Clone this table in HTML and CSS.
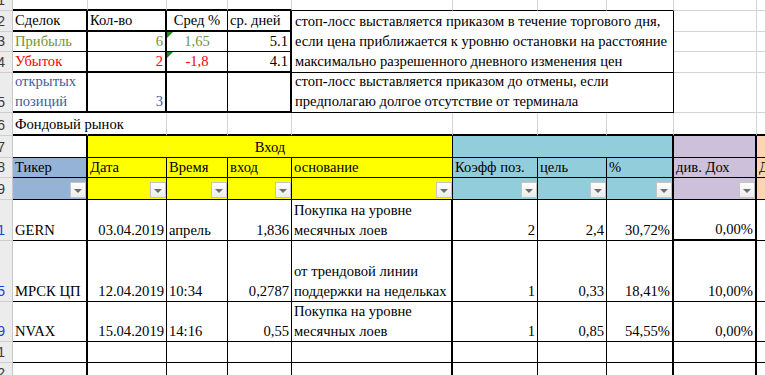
FILE: index.html
```html
<!DOCTYPE html>
<html lang="ru">
<head>
<meta charset="utf-8">
<title>Фондовый рынок</title>
<link rel="stylesheet" href="styles.css">
</head>
<body>
<div class="sheet">
  <!-- row 1 -->
  <div class="rh">1</div>
  <div class="c bT"></div><div class="c bT"></div><div class="c bT"></div><div class="c bT"></div>
  <div class="c bB"></div><div class="c bB"></div><div class="c bB"></div><div class="c bB"></div>
  <div class="c"></div><div class="c"></div>

  <!-- row 2 -->
  <div class="rh">2</div>
  <div class="c rT bT">Сделок</div>
  <div class="c rT bT">Кол-во</div>
  <div class="c rB bT ctr">Сред %</div>
  <div class="c rT bT">ср. дней</div>
  <div class="c note span4 rows3 rB bB"><p>стоп-лосс выставляется приказом в течение торгового дня,<br>если цена приближается к уровню остановки на расстояние<br>максимально разрешенного дневного изменения цен</p></div>
  <div class="c"></div><div class="c"></div>

  <!-- row 3 -->
  <div class="rh">3</div>
  <div class="c olive rT bB">Прибыль</div>
  <div class="c olive rT bB r">6</div>
  <div class="c olive rB bB ctr flag">1,65</div>
  <div class="c rT bB r">5.1</div>
  <div class="c"></div><div class="c"></div>

  <!-- row 4 -->
  <div class="rh">4</div>
  <div class="c red rT bT">Убыток</div>
  <div class="c red rT bT r">2</div>
  <div class="c red rB bT ctr flag">-1,8</div>
  <div class="c rT bT r">4.1</div>
  <div class="c"></div><div class="c"></div>

  <!-- row 5 -->
  <div class="rh">5</div>
  <div class="c steel rT bT"><p>открытых<br>позиций</p></div>
  <div class="c steel rT bT r">3</div>
  <div class="c rB bT"></div>
  <div class="c rT bT"></div>
  <div class="c note span4 rB bB"><p>стоп-лосс выставляется приказом до отмены, если<br>предполагаю долгое отсутствие от терминала</p></div>
  <div class="c"></div><div class="c"></div>

  <!-- row 6 -->
  <div class="rh">6</div>
  <div class="c over bT">Фондовый рынок</div>
  <div class="c bT"></div><div class="c bT"></div><div class="c bT"></div><div class="c bT"></div>
  <div class="c bT"></div><div class="c bT"></div><div class="c bT"></div><div class="c bT"></div><div class="c bT"></div>

  <!-- row 7 -->
  <div class="rh">7</div>
  <div class="c rT bB"></div>
  <div class="c yellow span4 rB bB ctr">Вход</div>
  <div class="c teal span3 rT bB"></div>
  <div class="c lav rT bB"></div>
  <div class="c peach bB"></div>

  <!-- row 8 -->
  <div class="rh">8</div>
  <div class="c blue rT bB">Тикер</div>
  <div class="c yellow rB bB">Дата</div>
  <div class="c yellow rB bB">Время</div>
  <div class="c yellow rB bB">вход</div>
  <div class="c yellow rB bB">основание</div>
  <div class="c teal rB bB">Коэфф поз.</div>
  <div class="c teal rB bB">цель</div>
  <div class="c teal rT bB">%</div>
  <div class="c lav rT bB">див. Дох</div>
  <div class="c peach bB">Дата выхода</div>

  <!-- row 9 (filters) -->
  <div class="rh">9</div>
  <div class="c fl blue rT bB"><span class="dd"></span></div>
  <div class="c fl yellow rB bB"><span class="dd"></span></div>
  <div class="c fl yellow rB bB"><span class="dd"></span></div>
  <div class="c fl yellow rB bB"><span class="dd"></span></div>
  <div class="c fl yellow rB bB"><span class="dd"></span></div>
  <div class="c fl teal rB bB"><span class="dd"></span></div>
  <div class="c fl teal rB bB"><span class="dd"></span></div>
  <div class="c fl teal rT bB"><span class="dd"></span></div>
  <div class="c fl lav rT bB"><span class="dd"></span></div>
  <div class="c fl peach bB"></div>

  <!-- row 11 -->
  <div class="rh hit">11</div>
  <div class="c rT bB">GERN</div>
  <div class="c rB bB r">03.04.2019</div>
  <div class="c rB bB">апрель</div>
  <div class="c rB bB r">1,836</div>
  <div class="c rT bB"><p>Покупка на уровне<br>месячных лоев</p></div>
  <div class="c rB bB r">2</div>
  <div class="c rB bB r">2,4</div>
  <div class="c rT bB r">30,72%</div>
  <div class="c rT bT r">0,00%</div>
  <div class="c bB"></div>

  <!-- row 15 -->
  <div class="rh hit">15</div>
  <div class="c rT bB">МРСК ЦП</div>
  <div class="c rB bB r">12.04.2019</div>
  <div class="c rB bB">10:34</div>
  <div class="c rB bB r">0,2787</div>
  <div class="c rT bB"><p>от трендовой линии<br>поддержки на недельках</p></div>
  <div class="c rB bB r">1</div>
  <div class="c rB bB r">0,33</div>
  <div class="c rT bB r">18,41%</div>
  <div class="c rT bB r">10,00%</div>
  <div class="c bB"></div>

  <!-- row 19 -->
  <div class="rh hit">19</div>
  <div class="c rT bB">NVAX</div>
  <div class="c rB bB r">15.04.2019</div>
  <div class="c rB bB">14:16</div>
  <div class="c rB bB r">0,55</div>
  <div class="c rT bB"><p>Покупка на уровне<br>месячных лоев</p></div>
  <div class="c rB bB r">1</div>
  <div class="c rB bB r">0,85</div>
  <div class="c rT bB r">54,55%</div>
  <div class="c rT bB r">0,00%</div>
  <div class="c bB"></div>

  <!-- row 21 -->
  <div class="rh">21</div>
  <div class="c rT bB"></div><div class="c rB bB"></div><div class="c rB bB"></div><div class="c rB bB"></div>
  <div class="c rT bB"></div><div class="c rB bB"></div><div class="c rB bB"></div><div class="c rT bB"></div>
  <div class="c rT bB"></div><div class="c bB"></div>

  <!-- row 22 -->
  <div class="rh">22</div>
  <div class="c rT bB"></div><div class="c rB bB"></div><div class="c rB bB"></div><div class="c rB bB"></div>
  <div class="c rT bB"></div><div class="c rB bB"></div><div class="c rB bB"></div><div class="c rT bB"></div>
  <div class="c rT bB"></div><div class="c bB"></div>
</div>
</body>
</html>
```

FILE: styles.css
```css
html, body {
  margin: 0;
  padding: 0;
  background: #ffffff;
  overflow: hidden;
}

body {
  width: 765px;
  height: 375px;
}

.sheet {
  display: grid;
  grid-template-columns: 13px 75px 79px 61px 64px 161px 85px 69px 67px 83px 100px;
  grid-template-rows: 11px 21px 20px 21px 40px 23px 22px 20px 22px 41px 61px 40px 21px 21px;
  font-family: "Liberation Serif", "Times New Roman", serif;
  font-size: 14.6px;
  line-height: 20px;
  color: #000000;
}

/* row headers */
.rh {
  box-sizing: border-box;
  display: flex;
  justify-content: flex-end;
  align-items: flex-end;
  overflow: hidden;
  padding-right: 7px;
  background: #ececec;
  border-right: 1px solid #c8c8c8;
  border-bottom: 1px solid #cfcfcf;
  font-family: "Liberation Sans", Arial, sans-serif;
  font-size: 14px;
  line-height: 20px;
  color: #3a3a3a;
  white-space: nowrap;
}
.rh.hit { color: #1a3fe0; }

/* cells */
.c {
  box-sizing: border-box;
  display: flex;
  align-items: flex-end;
  padding: 0 2px;
  border-right: 1px solid #d4d4d4;
  border-bottom: 1px solid #d4d4d4;
  white-space: nowrap;
  min-width: 0;
}
.c p { margin: 0; }

.r { justify-content: flex-end; }
.ctr { justify-content: center; }

.rT { border-right: 2px solid #000000; }
.rB { border-right: 1px solid #000000; }
.bT { border-bottom: 2px solid #000000; }
.bB { border-bottom: 1px solid #000000; }

.over { border-right-color: transparent; overflow: visible; }

.span4 { grid-column: span 4; }
.span3 { grid-column: span 3; }
.rows3 { grid-row: span 3; }

.note { padding-left: 3px; padding-bottom: 1px; }

/* text colors */
.olive { color: #76923c; }
.red { color: #ff0000; }
.steel { color: #3c5e9e; }

/* fills */
.yellow { background: #ffff00; }
.teal { background: #92cddc; }
.lav { background: #ccc0da; }
.peach { background: #fcd5b4; }
.blue { background: #95b3d7; }

/* green error indicator */
.flag { position: relative; }
.flag::before {
  content: "";
  position: absolute;
  left: 0;
  top: 0;
  border-top: 6px solid #1e8c1e;
  border-right: 6px solid transparent;
}

/* filter buttons */
.fl {
  justify-content: flex-end;
  padding: 0 0 1px 0;
}
.dd {
  box-sizing: border-box;
  width: 16px;
  height: 16px;
  border: 1px solid #c4c4c4;
  background: linear-gradient(#fdfdfd, #ececec);
  display: flex;
  align-items: center;
  justify-content: center;
}
.dd::before {
  content: "";
  border-top: 4px solid #6e6e6e;
  border-left: 4px solid transparent;
  border-right: 4px solid transparent;
  margin-top: 1px;
}
```
